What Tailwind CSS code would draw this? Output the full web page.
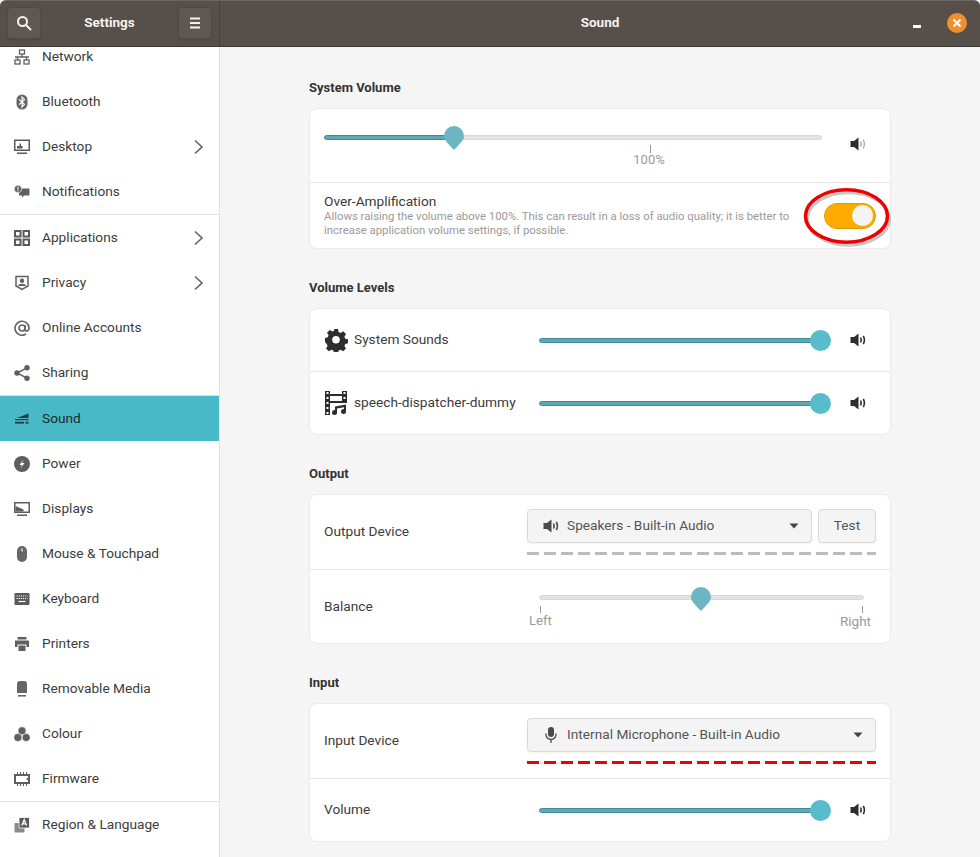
<!DOCTYPE html>
<html lang="en">
<head>
    <meta charset="UTF-8">
    <title>Settings - Sound</title>
    <script src="https://cdn.jsdelivr.net/npm/@tailwindcss/browser@4"></script>
</head>
<body class="w-[980px] h-[857px] overflow-hidden flex flex-col bg-[#f5f5f5] font-['Roboto',sans-serif] text-[13.700px] text-[#3a3a3a]">
    <svg class="hidden">
        <symbol id="speaker" viewBox="0 0 16 16">
            <path fill="currentColor" d="M0.500 5h3.500L8.500 1.500v13L4 11H0.500z"/>
            <path fill="none" stroke="currentColor" stroke-width="1.600" d="M10.500 5.500q1.300 2.500 0 5M13.300 3.800q2.200 4.200 0 8.400"/>
        </symbol>
        <symbol id="speaker-low" viewBox="0 0 16 16">
            <path fill="#2e2e2e" d="M0.500 5h3.500L8.500 1.500v13L4 11H0.500z"/>
            <path fill="none" stroke="#aaa" stroke-width="1.400" d="M10.500 5.500q1.300 2.500 0 5M13.300 3.800q2.200 4.200 0 8.400"/>
        </symbol>
        <symbol id="chevron" viewBox="0 0 12 16">
            <path fill="none" stroke="#666" stroke-width="1.700" d="M2 1.500l7 6.500-7 6.500"/>
        </symbol>
        <symbol id="caret" viewBox="0 0 12 8">
            <path fill="#444" d="M1.500 1.500h9L6 6.500z"/>
        </symbol>
        <symbol id="pin" viewBox="0 0 22 26">
            <path fill="#6cb6c2" d="M11 1a10 10 0 0 1 10 10c0 4-3 6.500-10 14C4 17.500 1 15 1 11A10 10 0 0 1 11 1z"/>
        </symbol>
    </svg>

    <!-- Titlebar -->
    <header class="h-[47px] shrink-0 flex bg-[#574f4a] text-white rounded-t-[6px] border-t border-[#6d6560] border-b-[#3d3733] border-b">
        <div class="w-[220px] shrink-0 flex items-center justify-between pl-[7px] pr-[7px] border-r border-[#47403c]">
            <button class="w-[34px] h-[32px] -mt-[2px] rounded-[4px] bg-[#5f5752] border border-[#524a45] shadow-sm flex items-center justify-center">
                <svg class="w-4 h-4" viewBox="0 0 16 16" fill="none" stroke="#f2f2f2" stroke-width="2"><circle cx="6.500" cy="6.500" r="4.500"/><path d="M10 10l5 5"/></svg>
            </button>
            <span class="font-bold text-[13.500px] text-[#f4f2f0] -mt-[3px]">Settings</span>
            <button class="w-[34px] h-[32px] -mt-[2px] rounded-[4px] bg-[#5f5752] border border-[#524a45] shadow-sm flex items-center justify-center">
                <svg class="w-4 h-4" viewBox="0 0 16 16" fill="#f2f2f2"><rect x="3" y="2.500" width="10" height="2"/><rect x="3" y="7" width="10" height="2"/><rect x="3" y="11.500" width="10" height="2"/></svg>
            </button>
        </div>
        <div class="flex-1 relative flex items-center justify-center">
            <span class="font-bold text-[13.500px] text-[#f4f2f0] -mt-[3px]">Sound</span>
            <div class="absolute right-[13px] top-[12px] flex items-center gap-[26px]">
                <span class="block w-[8px] h-[3px] bg-white mt-[7px]"></span>
                <span class="w-5 h-5 rounded-full bg-[#f18f2d] flex items-center justify-center">
                    <svg class="w-[10px] h-[10px]" viewBox="0 0 10 10" stroke="#fff" stroke-width="2.200"><path d="M1.500 1.500l7 7M8.500 1.500l-7 7"/></svg>
                </span>
            </div>
        </div>
    </header>

    <div class="flex-1 min-h-0 flex">
        <!-- Sidebar -->
        <aside class="w-[220px] shrink-0 bg-white border-r border-[#e2e2e2] overflow-hidden">
            <nav class="-mt-[13px] text-[13.700px] text-[#3c3c3c] [&_span]:-mt-[1px]">
                <a class="h-[45px] flex items-center pl-[14px] pr-[14px] gap-3">
                    <svg class="w-4 h-4 shrink-0" viewBox="0 0 16 16" fill="none" stroke="#5f5f5f" stroke-width="1.300"><rect x="5.500" y="1" width="5" height="4"/><rect x="1" y="11" width="5" height="4"/><rect x="10" y="11" width="5" height="4"/><path d="M8 5v3M1 8h14M3.500 8v3M12.500 8v3" /></svg>
                    <span>Network</span>
                </a>
                <a class="h-[45px] flex items-center pl-[14px] pr-[14px] gap-3">
                    <svg class="w-4 h-4 shrink-0" viewBox="0 0 16 16"><rect x="2.500" y="0.500" width="11" height="15" rx="5.500" fill="#666"/><path fill="none" stroke="#fff" stroke-width="1.100" d="M5 5.300l5.500 5L8 13V3l2.500 2.700L5 10.700"/></svg>
                    <span>Bluetooth</span>
                </a>
                <a class="h-[45px] flex items-center pl-[14px] pr-[14px] gap-3">
                    <svg class="w-4 h-4 shrink-0" viewBox="0 0 16 16" fill="#5a5a5a"><path fill-rule="evenodd" d="M0 0.500h16v11.500H0zM1.500 2v8.500h13V2z"/><path d="M3 9.500h5.500V7H7V4.500H5.500V7H3zM3 13.500h10V15H3z"/></svg>
                    <span class="flex-1">Desktop</span>
                    <svg class="w-3 h-4"><use href="#chevron"/></svg>
                </a>
                <a class="h-[45px] flex items-center pl-[14px] pr-[14px] gap-3">
                    <svg class="w-4 h-4 shrink-0" viewBox="0 0 16 16" fill="#5f5f5f"><path d="M6 4.500h9.500v7H10l-2 2v-2H5V9z"/><circle cx="4" cy="5" r="3.700" stroke="#fff" stroke-width="0.600"/><rect x="3.400" y="2.800" width="1.200" height="2.700" fill="#fff"/><rect x="3.400" y="6.200" width="1.200" height="1.100" fill="#fff"/></svg>
                    <span>Notifications</span>
                </a>
                <div class="h-px bg-[#e2e2e2]"></div>
                <a class="h-[45px] flex items-center pl-[14px] pr-[14px] gap-3">
                    <svg class="w-4 h-4 shrink-0" viewBox="0 0 16 16" fill="none" stroke="#5a5a5a" stroke-width="2"><rect x="1" y="1" width="5.500" height="5.500"/><rect x="9.500" y="1" width="5.500" height="5.500"/><rect x="1" y="9.500" width="5.500" height="5.500"/><rect x="9.500" y="9.500" width="5.500" height="5.500"/></svg>
                    <span class="flex-1">Applications</span>
                    <svg class="w-3 h-4"><use href="#chevron"/></svg>
                </a>
                <a class="h-[45px] flex items-center pl-[14px] pr-[14px] gap-3">
                    <svg class="w-4 h-4 shrink-0" viewBox="0 0 16 16"><path fill="none" stroke="#5f5f5f" stroke-width="1.500" d="M2 1.500h12V11l-6 3.500L2 11z"/><circle cx="8" cy="5.800" r="2.200" fill="#5f5f5f"/><path fill="#5f5f5f" d="M4 11c0-3 8-3 8 0z"/></svg>
                    <span class="flex-1">Privacy</span>
                    <svg class="w-3 h-4"><use href="#chevron"/></svg>
                </a>
                <a class="h-[45px] flex items-center pl-[14px] pr-[14px] gap-3">
                    <svg class="w-4 h-4 shrink-0" viewBox="0 0 16 16" fill="none" stroke="#666" stroke-width="1.700"><circle cx="8" cy="8" r="3"/><path d="M11 5v4.500c0 2.500 4 2 4-1.500a7 7 0 1 0-3 6"/></svg>
                    <span>Online Accounts</span>
                </a>
                <a class="h-[45px] flex items-center pl-[14px] pr-[14px] gap-3">
                    <svg class="w-4 h-4 shrink-0" viewBox="0 0 16 16" fill="#5f5f5f"><circle cx="3" cy="8" r="2.700"/><circle cx="13" cy="2.800" r="2.700"/><circle cx="13" cy="13.200" r="2.700"/><path fill="none" stroke="#5f5f5f" stroke-width="1.500" d="M13 2.800L3 8l10 5.200"/></svg>
                    <span>Sharing</span>
                </a>
                <div class="h-px bg-[#e2e2e2]"></div>
                <a class="h-[45px] flex items-center pl-[14px] pr-[14px] gap-3 bg-[#48b9c7] text-[#1f2a2c]">
                    <svg class="w-4 h-4 shrink-0" viewBox="0 0 16 16" fill="#2b3a3d"><path d="M3 7L14.500 2.500V7z"/><rect x="1" y="8" width="13.500" height="1.200"/><rect x="1" y="10.800" width="9" height="1.800"/><rect x="11.500" y="10.800" width="3" height="1.800"/></svg>
                    <span>Sound</span>
                </a>
                <a class="h-[45px] flex items-center pl-[14px] pr-[14px] gap-3">
                    <svg class="w-4 h-4 shrink-0" viewBox="0 0 16 16"><circle cx="8" cy="8" r="8" fill="#5f5f5f"/><path fill="#fff" d="M9.500 3.500L5.500 9H8l-1.500 3.500 4-5.500H8z"/></svg>
                    <span>Power</span>
                </a>
                <a class="h-[45px] flex items-center pl-[14px] pr-[14px] gap-3">
                    <svg class="w-4 h-4 shrink-0" viewBox="0 0 16 16" fill="#5f5f5f"><path fill-rule="evenodd" d="M0 1h16v11H0zM14.500 2.500v8h-13v-8z" clip-rule="evenodd"/><path d="M1.500 5l8 3.500v2h-8zM3 13.500h10V15H3z"/></svg>
                    <span>Displays</span>
                </a>
                <a class="h-[45px] flex items-center pl-[14px] pr-[14px] gap-3">
                    <svg class="w-4 h-4 shrink-0" viewBox="0 0 16 16"><rect x="3" y="0" width="10" height="16" rx="5" fill="#666"/><rect x="7.400" y="2.500" width="1.200" height="3" fill="#fff"/></svg>
                    <span>Mouse &amp; Touchpad</span>
                </a>
                <a class="h-[45px] flex items-center pl-[14px] pr-[14px] gap-3">
                    <svg class="w-4 h-4 shrink-0" viewBox="0 0 16 16"><rect x="0.500" y="2" width="15" height="12" rx="1" fill="#5a5a5a"/><path stroke="#fff" stroke-width="1.200" stroke-dasharray="1.200 0.900" d="M2.500 5h11M2.500 7.500h11"/><path stroke="#fff" stroke-width="1.200" d="M4.500 10.500h7"/></svg>
                    <span>Keyboard</span>
                </a>
                <a class="h-[45px] flex items-center pl-[14px] pr-[14px] gap-3">
                    <svg class="w-4 h-4 shrink-0" viewBox="0 0 16 16" fill="#5f5f5f"><rect x="3.500" y="1" width="9" height="2.500"/><path d="M1 4.500h14V11h-2.500V8.500h-9V11H1z"/><rect x="4.500" y="9.500" width="7" height="5.500"/></svg>
                    <span>Printers</span>
                </a>
                <a class="h-[45px] flex items-center pl-[14px] pr-[14px] gap-3">
                    <svg class="w-4 h-4 shrink-0" viewBox="0 0 16 16" fill="#666"><path d="M6 0h4a3 3 0 0 1 3 3v9H3V3a3 3 0 0 1 3-3z"/><rect x="4" y="14" width="8" height="1.600"/></svg>
                    <span>Removable Media</span>
                </a>
                <a class="h-[45px] flex items-center pl-[14px] pr-[14px] gap-3">
                    <svg class="w-4 h-4 shrink-0" viewBox="0 0 16 16" fill="#5f5f5f" stroke="#fff" stroke-width="0.500"><circle cx="8" cy="4.800" r="4"/><circle cx="3.800" cy="11.500" r="4"/><circle cx="12.200" cy="11.500" r="4"/></svg>
                    <span>Colour</span>
                </a>
                <a class="h-[45px] flex items-center pl-[14px] pr-[14px] gap-3">
                    <svg class="w-4 h-4 shrink-0" viewBox="0 0 16 16"><path fill="none" stroke="#5f5f5f" stroke-width="2" d="M1 4h14v8H1z"/><path fill="#5f5f5f" d="M15 6l-3 2 3 2zM3 1h1v2H3zM6 1h1v2H6zM9 1h1v2H9zM12 1h1v2h-1zM3 13h1v2H3zM6 13h1v2H6zM9 13h1v2H9zM12 13h1v2h-1z"/></svg>
                    <span>Firmware</span>
                </a>
                <div class="h-px bg-[#e2e2e2]"></div>
                <a class="h-[45px] flex items-center pl-[14px] pr-[14px] gap-3">
                    <svg class="w-4 h-4 shrink-0" viewBox="0 0 16 16"><rect x="0.500" y="6" width="10" height="9.500" rx="1" fill="#8a8a8a"/><rect x="5" y="0.500" width="10.500" height="10.500" rx="1" fill="#5a5a5a" stroke="#fff" stroke-width="0.800"/><path fill="none" stroke="#fff" stroke-width="1.300" d="M7.800 8.500L10.200 2.800l2.400 5.700M8.600 6.800h3.200"/></svg>
                    <span>Region &amp; Language</span>
                </a>
            </nav>
        </aside>

        <!-- Main panel -->
        <main class="flex-1 min-w-0 pl-[89px] pr-[89px] pt-[30px] relative">
            <!-- System Volume -->
            <h2 class="h-5 leading-[22px] mb-[11px] font-bold text-[13px] text-[#333]">System Volume</h2>
            <section class="bg-white border border-[#ebebeb] rounded-[8px] mb-[28px]">
                <div class="h-[74px] border-b border-[#e6e6e6] pl-[14px] pr-[16px] flex">
                    <div class="relative w-[498px] mt-[26px]">
                        <div class="h-[5px] rounded-full bg-[#e3e3e3] border border-[#d8d8d8]"></div>
                        <div class="absolute left-0 top-0 w-[130px] h-[5px] rounded-l-full bg-[#5fa9b5] border border-[#3f8b98]"></div>
                        <svg class="absolute left-[119px] -top-[10px] w-[22px] h-[26px]"><use href="#pin"/></svg>
                        <span class="absolute left-[326px] top-[10px] w-px h-[8px] bg-[#999]"></span>
                        <span class="absolute left-[307px] top-[15px] w-[36px] text-center text-[13px] leading-[20px] text-[#999]">100%</span>
                    </div>
                    <svg class="w-4 h-4 ml-[28px] mt-[27px] shrink-0"><use href="#speaker-low"/></svg>
                </div>
                <div class="h-[65px] pl-[14px] pr-[14px] flex items-center">
                    <div class="flex-1 min-w-0 self-start pt-[9px]">
                        <div class="h-[17px] text-[13.700px] leading-[18px] text-[#3a3a3a]">Over-Amplification</div>
                        <p class="text-[11.350px] leading-[14px] text-[#9a9a9a]">Allows raising the volume above 100%. This can result in a loss of audio quality; it is better to<br>increase application volume settings, if possible.</p>
                    </div>
                    <div class="w-[52px] h-[26px] shrink-0 rounded-full bg-[#ffab00] border border-[#dd9a00] flex items-center justify-end pr-[2px]">
                        <span class="block w-[21px] h-[21px] rounded-full bg-[#f4f4f4]"></span>
                    </div>
                </div>
            </section>

            <!-- Volume Levels -->
            <h2 class="h-5 leading-[22px] mb-[11px] font-bold text-[13px] text-[#333]">Volume Levels</h2>
            <section class="bg-white border border-[#ebebeb] rounded-[8px] mb-[28px]">
                <div class="h-[63px] border-b border-[#e6e6e6] pl-[14px] pr-[16px] flex items-center">
                    <svg class="w-6 h-6 shrink-0" viewBox="0 0 24 24" fill="#2e2e2e"><path fill-rule="evenodd" d="M10 1.500h4l.6 3 2 .9 2.600-1.600 2.800 2.800-1.600 2.600.9 2 2.700.6v4l-2.700.6-.9 2 1.600 2.600-2.800 2.800-2.600-1.600-2 .9-.6 2.400h-4l-.6-2.400-2-.9-2.600 1.600-2.800-2.800 1.600-2.600-.9-2L1 14.400v-4l2.700-.6.9-2L3 5.200 5.800 2.400 8.400 4l2-.9zM12 8.500a3.800 3.800 0 1 0 0 7.600 3.800 3.800 0 0 0 0-7.600z" transform="translate(0 -.5)"/></svg>
                    <span class="ml-[6px] w-[185px] -mt-[1px] text-[#3c3c3c]">System Sounds</span>
                    <div class="relative w-[282px]">
                        <div class="h-[5px] rounded-full bg-[#5fa9b5] border border-[#3f8b98]"></div>
                        <span class="absolute -right-[10px] -top-[8px] w-[21px] h-[21px] rounded-full bg-[#58bccb]"></span>
                    </div>
                    <svg class="w-4 h-4 ml-[29px] shrink-0 text-[#2e2e2e]"><use href="#speaker"/></svg>
                </div>
                <div class="h-[62px] pl-[14px] pr-[16px] flex items-center">
                    <svg class="w-6 h-6 shrink-0" viewBox="0 0 24 24" fill="#2e2e2e"><path fill-rule="evenodd" d="M1 0h5v24H1zM2.500 1v2h2V1zM2.500 6v2h2V6zM2.500 11v2h2v-2zM2.500 16v2h2v-2zM2.500 21v2h2v-2z"/><path fill-rule="evenodd" d="M18 0h5v12h-5zM19.500 1v2h2V1zM19.500 6v2h2V6z"/><path d="M6 3h12v2H6zM6 10h12v2H6z"/><path d="M11 15.500l11-2V21h-2v-4.800l-7 1.300V22h-2z"/><circle cx="10.500" cy="21.500" r="2.500"/><circle cx="19.500" cy="20.500" r="2.500"/></svg>
                    <span class="ml-[6px] w-[185px] -mt-[1px] text-[#3c3c3c]">speech-dispatcher-dummy</span>
                    <div class="relative w-[282px]">
                        <div class="h-[5px] rounded-full bg-[#5fa9b5] border border-[#3f8b98]"></div>
                        <span class="absolute -right-[10px] -top-[8px] w-[21px] h-[21px] rounded-full bg-[#58bccb]"></span>
                    </div>
                    <svg class="w-4 h-4 ml-[29px] shrink-0 text-[#2e2e2e]"><use href="#speaker"/></svg>
                </div>
            </section>

            <!-- Output -->
            <h2 class="h-5 leading-[22px] mb-[11px] font-bold text-[13px] text-[#333]">Output</h2>
            <section class="bg-white border border-[#ebebeb] rounded-[8px] mb-[28px]">
                <div class="h-[75px] border-b border-[#e6e6e6] pl-[14px] pr-[14px] flex">
                    <span class="w-[203px] mt-[26px] leading-[20px] text-[#3c3c3c]">Output Device</span>
                    <div class="w-[349px] mt-[14px]">
                        <div class="flex gap-[6px]">
                            <button class="w-[285px] h-[34px] rounded-[4px] bg-[#f4f4f4] border border-[#dadada] shadow-xs flex items-center pl-[15px] pr-[11px] text-[#555]">
                                <svg class="w-4 h-4 shrink-0 text-[#4a4a4a]"><use href="#speaker"/></svg>
                                <span class="flex-1 ml-2 text-left -mt-[1px]">Speakers - Built-in Audio</span>
                                <svg class="w-3 h-2 -mt-[1px]"><use href="#caret"/></svg>
                            </button>
                            <button class="w-[58px] h-[34px] rounded-[4px] bg-[#f4f4f4] border border-[#dadada] shadow-xs text-[#555] pb-[1px]">Test</button>
                        </div>
                        <div class="mt-[9px] h-[3px] bg-[repeating-linear-gradient(90deg,#bcbcbc_0_12px,transparent_12px_17px)]"></div>
                    </div>
                </div>
                <div class="h-[73px] pl-[14px] pr-[14px] flex">
                    <span class="w-[215px] mt-[26px] leading-[20px] text-[#3c3c3c]">Balance</span>
                    <div class="relative w-[325px] mt-[25px] h-[45px]">
                        <div class="h-[5px] rounded-full bg-[#e3e3e3] border border-[#d8d8d8]"></div>
                        <svg class="absolute left-[151px] -top-[9px] w-[22px] h-[26px]"><use href="#pin"/></svg>
                        <span class="absolute left-[1px] top-[11px] w-px h-[7px] bg-[#999]"></span>
                        <span class="absolute right-[1px] top-[11px] w-px h-[7px] bg-[#999]"></span>
                        <span class="absolute -left-[10px] top-[16px] text-[13px] leading-[20px] text-[#999]">Left</span>
                        <span class="absolute -right-[7px] top-[16px] text-[13.500px] leading-[20px] text-[#999]">Right</span>
                    </div>
                </div>
            </section>

            <!-- Input -->
            <h2 class="h-5 leading-[22px] mb-[11px] font-bold text-[13px] text-[#333]">Input</h2>
            <section class="bg-white border border-[#ebebeb] rounded-[8px]">
                <div class="h-[75px] border-b border-[#e6e6e6] pl-[14px] pr-[14px] flex">
                    <span class="w-[203px] mt-[26px] leading-[20px] text-[#3c3c3c]">Input Device</span>
                    <div class="w-[349px] mt-[14px]">
                        <button class="w-full h-[34px] rounded-[4px] bg-[#f4f4f4] border border-[#dadada] shadow-xs flex items-center pl-[15px] pr-[11px] text-[#555]">
                            <svg class="w-4 h-4 shrink-0" viewBox="0 0 16 16" fill="#4a4a4a"><rect x="5" y="0" width="6" height="10" rx="3"/><path fill="none" stroke="#4a4a4a" stroke-width="1.300" d="M3 6.500v1a5 5 0 0 0 10 0v-1M8 12.500V16"/></svg>
                            <span class="flex-1 ml-2 text-left -mt-[1px]">Internal Microphone - Built-in Audio</span>
                            <svg class="w-3 h-2 -mt-[1px]"><use href="#caret"/></svg>
                        </button>
                        <div class="mt-[9px] h-[3px] bg-[repeating-linear-gradient(90deg,#f00000_0_12px,transparent_12px_17px)]"></div>
                    </div>
                </div>
                <div class="h-[62px] pl-[14px] pr-[16px] flex items-center">
                    <span class="w-[215px] -mt-[1px] text-[#3c3c3c]">Volume</span>
                    <div class="relative w-[282px]">
                        <div class="h-[5px] rounded-full bg-[#5fa9b5] border border-[#3f8b98]"></div>
                        <span class="absolute -right-[10px] -top-[8px] w-[21px] h-[21px] rounded-full bg-[#58bccb]"></span>
                    </div>
                    <svg class="w-4 h-4 ml-[29px] shrink-0 text-[#2e2e2e]"><use href="#speaker"/></svg>
                </div>
            </section>

            <!-- Red annotation around the switch -->
            <svg class="absolute left-[582px] top-[138px] w-[94px] h-[64px]" viewBox="0 0 94 64" fill="none">
                <ellipse cx="45.500" cy="33" rx="41" ry="26.300" stroke="#000" stroke-opacity="0.220" stroke-width="3" transform="translate(1 1)"/>
                <ellipse cx="44.500" cy="31" rx="41" ry="26.300" stroke="#ee0000" stroke-width="3.500"/>
            </svg>
        </main>
    </div>
</body>
</html>
